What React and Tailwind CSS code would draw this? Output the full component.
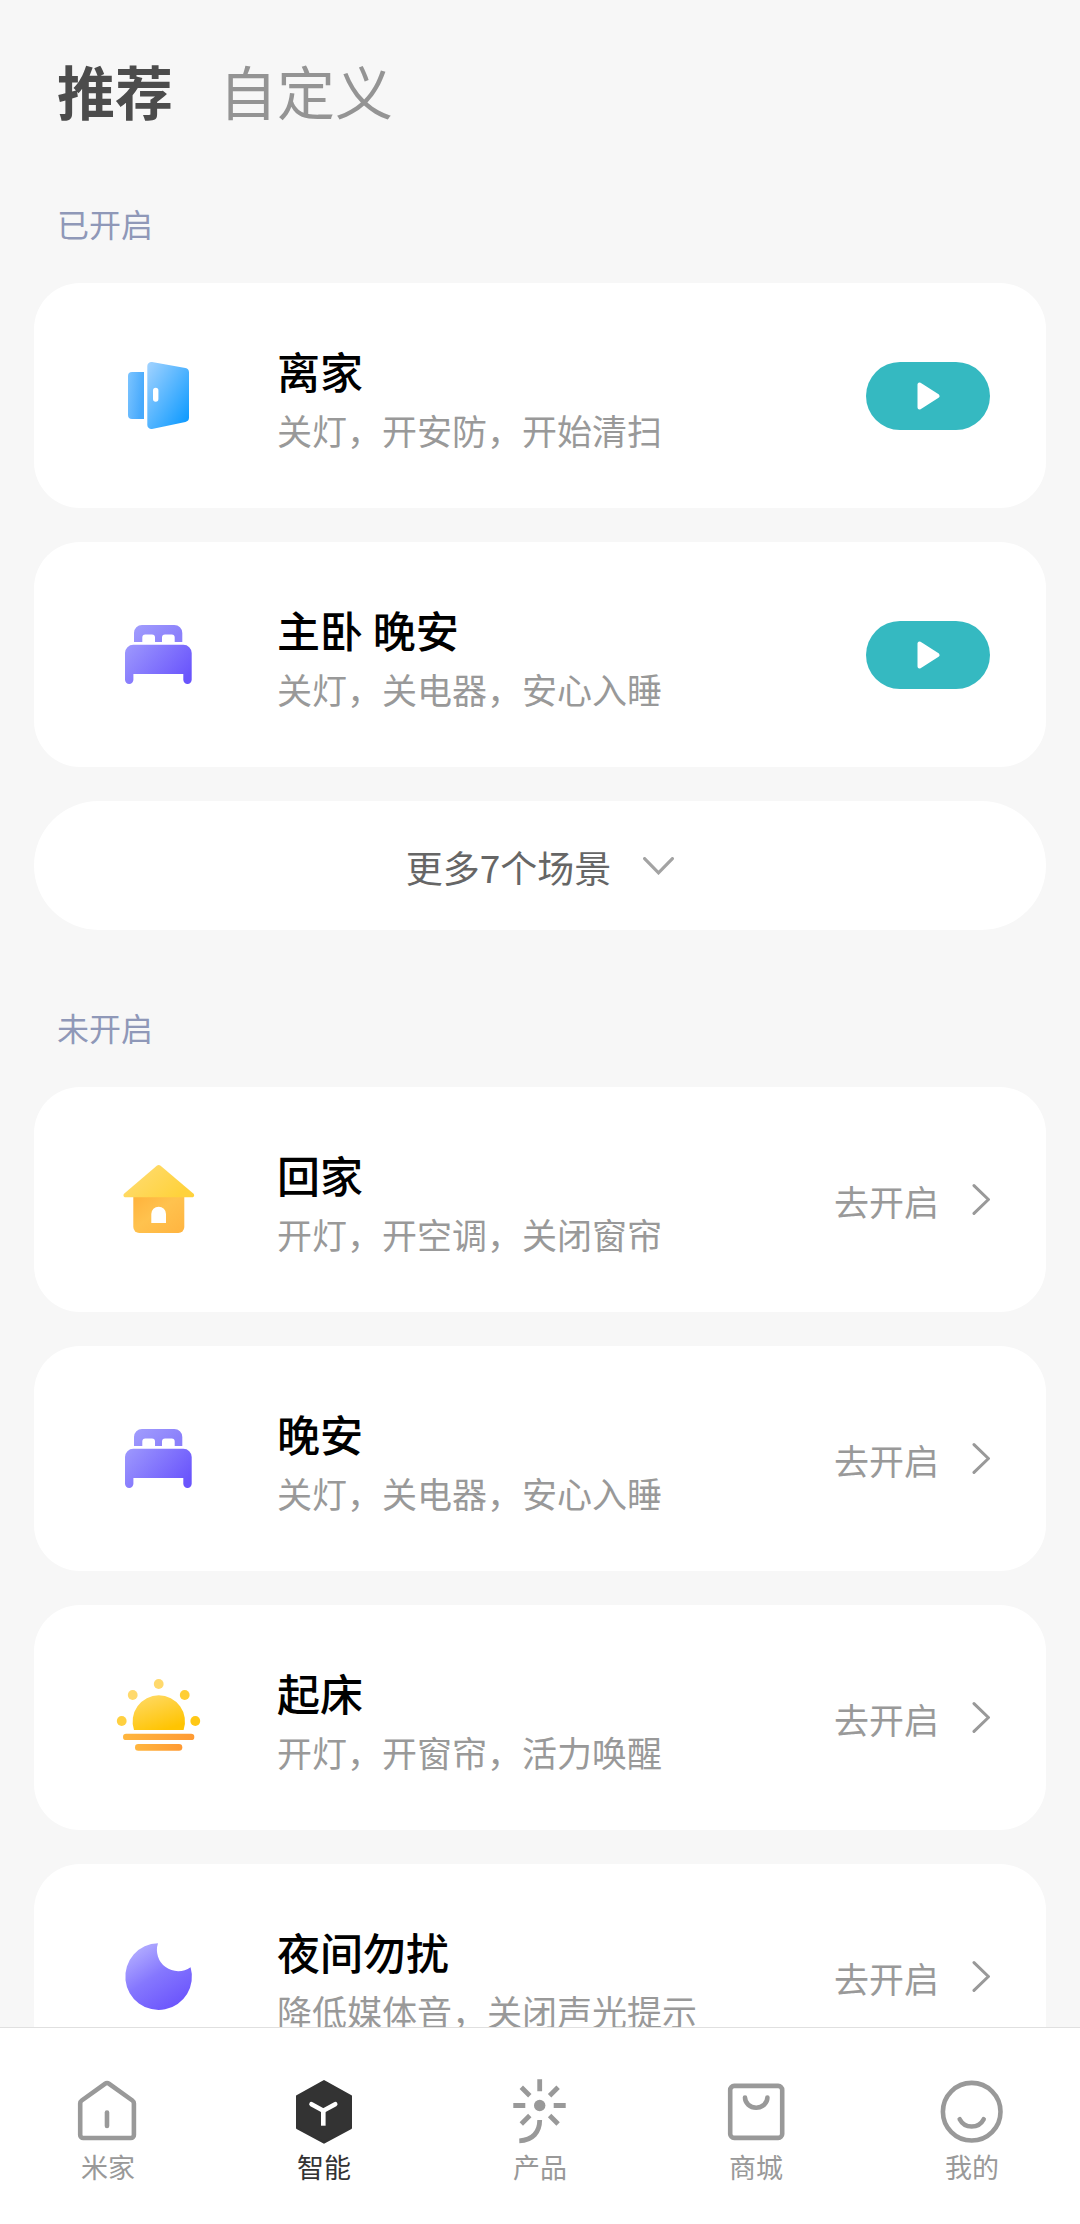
import { useId, useState } from 'react'

function DoorIcon() {
  const id = useId()
  return (
    <svg className="size-[95px]" viewBox="0 0 95 95" aria-hidden="true">
      <defs>
        <linearGradient id={`${id}-back`} x1="0" y1="0" x2="1" y2="0.4">
          <stop offset="0" stopColor="#7cc4ff" />
          <stop offset="1" stopColor="#46a9fc" />
        </linearGradient>
        <linearGradient id={`${id}-front`} x1="0" y1="0" x2="1" y2="1">
          <stop offset="0" stopColor="#a3d3ff" />
          <stop offset="1" stopColor="#0396ff" />
        </linearGradient>
      </defs>
      <path d="M34 24v47H22a4 4 0 0 1-4-4V28a4 4 0 0 1 4-4z" fill={`url(#${id}-back)`} />
      <path
        d="M42 14.1l33.4 6a4.4 4.4 0 0 1 3.6 4.3v45.2a4.4 4.4 0 0 1-3.6 4.3L42 80.9a4 4 0 0 1-4.7-3.9V18a4 4 0 0 1 4.7-3.9z"
        fill={`url(#${id}-front)`}
      />
      <rect x="43" y="39.7" width="5.4" height="14" rx="2.7" fill="#fff" />
    </svg>
  )
}

function BedIcon() {
  const id = useId()
  return (
    <svg className="size-[95px]" viewBox="0 0 95 95" aria-hidden="true">
      <defs>
        <linearGradient id={`${id}-head`} x1="0" y1="0" x2="1" y2="0.4">
          <stop offset="0" stopColor="#a19dfd" />
          <stop offset="1" stopColor="#8b80fb" />
        </linearGradient>
        <linearGradient id={`${id}-body`} x1="0" y1="0.2" x2="1" y2="0.7">
          <stop offset="0" stopColor="#9a94fd" />
          <stop offset="1" stopColor="#6a55fc" />
        </linearGradient>
      </defs>
      <path
        d="M24 35V26a8 8 0 0 1 8-8h32.3a8 8 0 0 1 8 8v9h-7.6v-4.5a3 3 0 0 0-3-3H55a3 3 0 0 0-3 3V35h-7v-4.5a3 3 0 0 0-3-3h-6.7a3 3 0 0 0-3 3V35z"
        fill={`url(#${id}-head)`}
      />
      <path
        d="M15 46a8.3 8.3 0 0 1 8.3-8.3h50.1a8.3 8.3 0 0 1 8.3 8.3v26.8a4.2 4.2 0 0 1-8.4 0V67H23.4v5.8a4.2 4.2 0 0 1-8.4 0z"
        fill={`url(#${id}-body)`}
      />
    </svg>
  )
}

function HouseIcon() {
  const id = useId()
  return (
    <svg className="size-[95px]" viewBox="0 0 95 95" aria-hidden="true">
      <defs>
        <linearGradient id={`${id}-roof`} x1="0" y1="0" x2="1" y2="0.5">
          <stop offset="0" stopColor="#ffdd78" />
          <stop offset="1" stopColor="#ffd23c" />
        </linearGradient>
        <linearGradient id={`${id}-wall`} x1="0" y1="0" x2="1" y2="1">
          <stop offset="0" stopColor="#ffb23b" />
          <stop offset="0.45" stopColor="#ffc24e" />
          <stop offset="1" stopColor="#ffb440" />
        </linearGradient>
      </defs>
      <path d="M23.3 44h51v31a6 6 0 0 1-6 6h-39a6 6 0 0 1-6-6z" fill={`url(#${id}-wall)`} />
      <path
        d="M46.8 13.7a3 3 0 0 1 3.8 0l32.7 27.7c1.6 1.4.8 3.8-1.3 3.8H15.6c-2.1 0-2.9-2.4-1.3-3.8z"
        fill={`url(#${id}-roof)`}
      />
      <path d="M41.3 71v-9a7.3 7.3 0 0 1 14.7 0v9z" fill="#fff" />
    </svg>
  )
}

function SunriseIcon() {
  const id = useId()
  return (
    <svg className="size-[95px]" viewBox="0 0 95 95" aria-hidden="true">
      <defs>
        <linearGradient id={`${id}-sun`} x1="0.1" y1="0" x2="0.6" y2="1">
          <stop offset="0" stopColor="#ffda67" />
          <stop offset="1" stopColor="#ffc402" />
        </linearGradient>
        <linearGradient id={`${id}-bar`} x1="0" y1="0" x2="1" y2="0">
          <stop offset="0" stopColor="#ffb63f" />
          <stop offset="1" stopColor="#ff9a33" />
        </linearGradient>
      </defs>
      <circle cx="48.7" cy="14" r="4.9" fill="#ffd96c" />
      <circle cx="22.7" cy="25" r="4.9" fill="#ffd96c" />
      <circle cx="74.7" cy="25" r="4.9" fill="#ffce35" />
      <circle cx="11.7" cy="51" r="4.9" fill="#ffd040" />
      <circle cx="85.3" cy="51" r="4.9" fill="#ffc816" />
      <path d="M24 60a26.2 26.2 0 1 1 49.6 0z" fill={`url(#${id}-sun)`} />
      <rect x="13" y="63.7" width="71.3" height="6.4" rx="3.2" fill={`url(#${id}-bar)`} />
      <rect x="25" y="74.1" width="47.3" height="6.6" rx="3.3" fill={`url(#${id}-bar)`} />
    </svg>
  )
}

function MoonIcon() {
  const id = useId()
  return (
    <svg className="size-[95px]" viewBox="0 0 95 95" aria-hidden="true">
      <defs>
        <linearGradient id={id} x1="0.1" y1="0" x2="0.75" y2="1">
          <stop offset="0" stopColor="#bab6ff" />
          <stop offset="0.5" stopColor="#8577fe" />
          <stop offset="1" stopColor="#6a53fc" />
        </linearGradient>
      </defs>
      <path d="M48 14.3A33.3 33.3 0 1 0 80.6 38.3A21.3 21.3 0 0 1 48 14.3z" fill={`url(#${id})`} />
    </svg>
  )
}

function HomeTabIcon() {
  return (
    <svg className="size-[66px]" viewBox="0 0 66 66" fill="none" stroke="currentColor" strokeWidth="4.6" strokeLinejoin="round" strokeLinecap="round" aria-hidden="true">
      <path d="M29.9 4.8a3.6 3.6 0 0 1 4.3 0L57.4 21.5a3.6 3.6 0 0 1 1.5 3V56a3 3 0 0 1-3 3H8.2a3 3 0 0 1-3-3V24.5a3.6 3.6 0 0 1 1.5-3z" />
      <path d="M32 33.5v13.5" />
    </svg>
  )
}

function SmartTabIcon() {
  return (
    <svg className="size-[66px]" viewBox="0 0 66 66" aria-hidden="true">
      <path d="M33 2L60 17v32L33 63.7L6 49V17z" fill="currentColor" stroke="currentColor" strokeWidth="2" strokeLinejoin="round" />
      <path d="M20.5 25.2l11.8 6.5l11.9-6.5" fill="none" stroke="#fff" strokeWidth="4.6" strokeLinecap="round" />
      <path d="M32.3 31v15.7" fill="none" stroke="#fff" strokeWidth="4.6" />
    </svg>
  )
}

function ProductTabIcon() {
  return (
    <svg className="size-[66px]" viewBox="0 0 66 66" fill="none" stroke="currentColor" strokeWidth="4.8" aria-hidden="true">
      <circle cx="32.7" cy="26.5" r="5.7" fill="currentColor" stroke="none" />
      <path d="M32.7 .3v12M6.3 26.5h12M46.7 26.5h12M14.3 8.3l8.5 8.5M51.1 8.3l-8.5 8.5M14.3 45l8.5-8.5M51.1 45l-8.5-8.5" />
      <path d="M32.7 41c0 12-7 20.4-20.4 20.8" />
    </svg>
  )
}

function MallTabIcon() {
  return (
    <svg className="size-[66px]" viewBox="0 0 66 66" fill="none" stroke="currentColor" strokeWidth="4.6" strokeLinecap="round" aria-hidden="true">
      <rect x="7.2" y="6.9" width="52" height="52" rx="4" />
      <path d="M22 18.5a11.2 10.2 0 0 0 22.4 0" />
    </svg>
  )
}

function MineTabIcon() {
  return (
    <svg className="size-[66px]" viewBox="0 0 66 66" fill="none" stroke="currentColor" strokeWidth="4.6" strokeLinecap="round" aria-hidden="true">
      <circle cx="32.7" cy="32.7" r="28.8" />
      <path d="M20.7 40.2a13.5 13.5 0 0 0 24 0" />
    </svg>
  )
}

const enabledScenes = [
  { name: '离家', desc: '关灯，开安防，开始清扫', Icon: DoorIcon },
  { name: '主卧 晚安', desc: '关灯，关电器，安心入睡', Icon: BedIcon }
]

const disabledScenes = [
  { name: '回家', desc: '开灯，开空调，关闭窗帘', Icon: HouseIcon },
  { name: '晚安', desc: '关灯，关电器，安心入睡', Icon: BedIcon },
  { name: '起床', desc: '开灯，开窗帘，活力唤醒', Icon: SunriseIcon },
  { name: '夜间勿扰', desc: '降低媒体音，关闭声光提示', Icon: MoonIcon }
]

const tabs = [
  { label: '米家', Icon: HomeTabIcon },
  { label: '智能', Icon: SmartTabIcon },
  { label: '产品', Icon: ProductTabIcon },
  { label: '商城', Icon: MallTabIcon },
  { label: '我的', Icon: MineTabIcon }
]

function SceneCard({ scene, children }) {
  const { name, desc, Icon } = scene
  return (
    <li className="flex items-center gap-[72px] rounded-[46px] bg-white py-[49px] pl-[76px] pr-[56px]">
      <div className="shrink-0">
        <Icon />
      </div>
      <div className="min-w-0 flex-1 pt-[7px]">
        <h3 className="text-[43px] leading-[62px] font-medium text-black">{name}</h3>
        <p className="text-[35px] leading-[58px] text-[#999999]">{desc}</p>
      </div>
      <div className="shrink-0">{children}</div>
    </li>
  )
}

function SectionTitle({ children }) {
  return <h2 className="mt-[73px] mb-9 px-[23px] text-[32px] leading-[48px] text-[#8f98b8]">{children}</h2>
}

export default function App() {
  const [view, setView] = useState('推荐')
  const [active, setActive] = useState('智能')

  return (
    <div className="flex h-screen flex-col bg-[#f7f7f7] font-['Noto_Sans_CJK_SC',sans-serif]">
      <main className="min-h-0 flex-1 overflow-y-auto px-[34px] pb-[34px] [scrollbar-width:none]">
        <header className="flex gap-[46px] px-[23px] pt-[54px] text-[58px] leading-[72px]">
          {['推荐', '自定义'].map((item) => (
            <button
              key={item}
              type="button"
              onClick={() => setView(item)}
              className={view === item ? 'font-bold text-[#4c4c4c]' : 'text-[#949494]'}
            >
              {item}
            </button>
          ))}
        </header>

        <section>
          <SectionTitle>已开启</SectionTitle>
          <ul className="space-y-[34px]">
            {enabledScenes.map((scene) => (
              <SceneCard key={scene.name} scene={scene}>
                <button
                  type="button"
                  aria-label={scene.name}
                  className="flex h-[68px] w-[124px] items-center justify-center rounded-full bg-[#35b9c1]"
                >
                  <svg className="h-7 w-6" viewBox="0 0 24 28" aria-hidden="true">
                    <path d="M3.5 2.5v23L21.5 14z" fill="#fff" stroke="#fff" strokeWidth="4" strokeLinejoin="round" />
                  </svg>
                </button>
              </SceneCard>
            ))}
          </ul>
          <button
            type="button"
            className="mt-[34px] flex h-[129px] w-full items-center justify-center gap-8 rounded-full bg-white text-[37px] text-[#666666]"
          >
            <span className="pt-[5px]">更多7个场景</span>
            <svg className="h-[18px] w-[31px]" viewBox="0 0 31 18" fill="none" stroke="#a3a3a3" strokeWidth="3.2" strokeLinecap="round" aria-hidden="true">
              <path d="M1.6 1.6l13.9 14.2l13.9-14.2" />
            </svg>
          </button>
        </section>

        <section>
          <SectionTitle>未开启</SectionTitle>
          <ul className="space-y-[34px]">
            {disabledScenes.map((scene) => (
              <SceneCard key={scene.name} scene={scene}>
                <button type="button" className="flex items-center gap-[33px] text-[35px] leading-[60px] text-[#999999]">
                  <span className="pt-[3px]">去开启</span>
                  <svg className="h-[31px] w-[18px]" viewBox="0 0 18 31" fill="none" stroke="currentColor" strokeWidth="3" strokeLinecap="round" aria-hidden="true">
                    <path d="M2 1.6l14.4 13.9l-14.4 13.9" />
                  </svg>
                </button>
              </SceneCard>
            ))}
          </ul>
        </section>
      </main>

      <nav className="grid shrink-0 grid-cols-5 border-t border-[#e0e0e0] bg-white pt-[51px] pb-[39px]">
        {tabs.map(({ label, Icon }) => (
          <button
            key={label}
            type="button"
            onClick={() => setActive(label)}
            className={`flex flex-col items-center gap-1 text-[27px] leading-9 ${
              active === label ? 'text-[#333333]' : 'text-[#999999]'
            }`}
          >
            <Icon />
            {label}
          </button>
        ))}
      </nav>
    </div>
  )
}
